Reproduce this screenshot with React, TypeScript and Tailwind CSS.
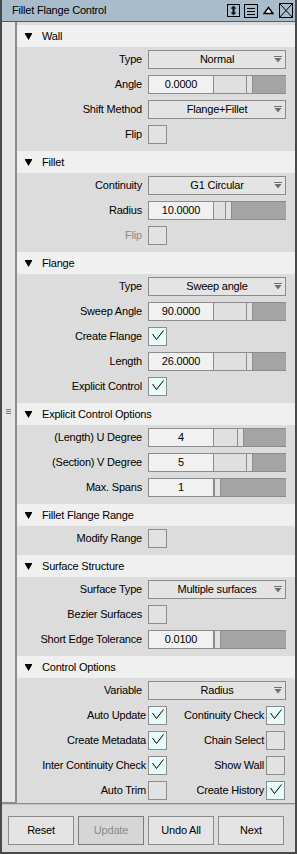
import React from 'react';

type CheckItem = { label: string; checked: boolean; disabled?: boolean };

type Row =
  | { kind: 'select'; label: string; value: string }
  | { kind: 'slider'; label: string; value: string; thumb: number }
  | { kind: 'check'; label: string; checked: boolean; disabled?: boolean }
  | { kind: 'pair'; left: CheckItem; right: CheckItem };

interface Section {
  title: string;
  rows: Row[];
}

const sections: Section[] = [
  {
    title: 'Wall',
    rows: [
      { kind: 'select', label: 'Type', value: 'Normal' },
      { kind: 'slider', label: 'Angle', value: '0.0000', thumb: 32 },
      { kind: 'select', label: 'Shift Method', value: 'Flange+Fillet' },
      { kind: 'check', label: 'Flip', checked: false },
    ],
  },
  {
    title: 'Fillet',
    rows: [
      { kind: 'select', label: 'Continuity', value: 'G1 Circular' },
      { kind: 'slider', label: 'Radius', value: '10.0000', thumb: 11 },
      { kind: 'check', label: 'Flip', checked: false, disabled: true },
    ],
  },
  {
    title: 'Flange',
    rows: [
      { kind: 'select', label: 'Type', value: 'Sweep angle' },
      { kind: 'slider', label: 'Sweep Angle', value: '90.0000', thumb: 32 },
      { kind: 'check', label: 'Create Flange', checked: true },
      { kind: 'slider', label: 'Length', value: '26.0000', thumb: 32 },
      { kind: 'check', label: 'Explicit Control', checked: true },
    ],
  },
  {
    title: 'Explicit Control Options',
    rows: [
      { kind: 'slider', label: '(Length) U Degree', value: '4', thumb: 23 },
      { kind: 'slider', label: '(Section) V Degree', value: '5', thumb: 32 },
      { kind: 'slider', label: 'Max. Spans', value: '1', thumb: 0 },
    ],
  },
  {
    title: 'Fillet Flange Range',
    rows: [{ kind: 'check', label: 'Modify Range', checked: false }],
  },
  {
    title: 'Surface Structure',
    rows: [
      { kind: 'select', label: 'Surface Type', value: 'Multiple surfaces' },
      { kind: 'check', label: 'Bezier Surfaces', checked: false },
      { kind: 'slider', label: 'Short Edge Tolerance', value: '0.0100', thumb: 0 },
    ],
  },
  {
    title: 'Control Options',
    rows: [
      { kind: 'select', label: 'Variable', value: 'Radius' },
      {
        kind: 'pair',
        left: { label: 'Auto Update', checked: true },
        right: { label: 'Continuity Check', checked: true },
      },
      {
        kind: 'pair',
        left: { label: 'Create Metadata', checked: true },
        right: { label: 'Chain Select', checked: false },
      },
      {
        kind: 'pair',
        left: { label: 'Inter Continuity Check', checked: true },
        right: { label: 'Show Wall', checked: false },
      },
      {
        kind: 'pair',
        left: { label: 'Auto Trim', checked: false },
        right: { label: 'Create History', checked: true },
      },
    ],
  },
];

const Checkbox: React.FC<{ checked: boolean }> = ({ checked }) => (
  <div
    className={`w-[19px] h-[19px] shrink-0 border border-[#8c8c8c] ${
      checked ? 'bg-[#e8fbfb]' : 'bg-[#e2e2e2]'
    }`}
  >
    {checked && (
      <svg width="17" height="17" viewBox="0 0 17 17">
        <polyline points="3.5,6 7.5,11.5 14.5,2.5" fill="none" stroke="#000" strokeWidth="1" />
      </svg>
    )}
  </div>
);

const Label: React.FC<{ text: string; disabled?: boolean }> = ({ text, disabled }) => (
  <div
    className={`w-[125px] shrink-0 h-[19px] leading-[19px] text-right whitespace-nowrap ${
      disabled ? 'text-[#8a8a8a]' : 'text-black'
    }`}
  >
    {text}
  </div>
);

const Select: React.FC<{ value: string }> = ({ value }) => (
  <div className="relative w-[138px] h-[19px] border border-[#8c8c8c] bg-[#e4e4e4] leading-[17px] text-center">
    {value}
    <svg className="absolute right-[3px] top-[5px]" width="8" height="7" viewBox="0 0 8 7">
      <rect x="0" y="0" width="8" height="1" fill="#707070" />
      <polygon points="0.5,2 7.5,2 4,6.5" fill="#707070" />
    </svg>
  </div>
);

const Slider: React.FC<{ value: string; thumb: number }> = ({ value, thumb }) => (
  <div className="flex w-[138px] h-[19px] border-y border-l border-[#8c8c8c]">
    <div className="w-[65px] shrink-0 bg-[#f1f1f1] border-r border-[#8c8c8c] leading-[17px] text-center">
      {value}
    </div>
    <div className="shrink-0 bg-[#e0e0e0]" style={{ width: thumb }} />
    <div className="w-[7px] shrink-0 bg-[#e2e2e2] border-x border-[#8c8c8c]" />
    <div className="flex-1 bg-[#a4a4a4]" />
  </div>
);

const PairCell: React.FC<{ item: CheckItem; width: string }> = ({ item, width }) => (
  <div className={`${width} shrink-0 flex justify-end items-start gap-[2px]`}>
    <div className="h-[19px] leading-[19px] whitespace-nowrap">{item.label}</div>
    <Checkbox checked={item.checked} />
  </div>
);

const RowView: React.FC<{ row: Row }> = ({ row }) => {
  if (row.kind === 'pair') {
    return (
      <div className="flex h-[25px] items-start">
        <PairCell item={row.left} width="w-[150px]" />
        <PairCell item={row.right} width="w-[118px]" />
      </div>
    );
  }
  return (
    <div className="flex h-[25px] items-start gap-[6px]">
      <Label text={row.label} disabled={row.kind === 'check' && row.disabled} />
      {row.kind === 'select' && <Select value={row.value} />}
      {row.kind === 'slider' && <Slider value={row.value} thumb={row.thumb} />}
      {row.kind === 'check' && <Checkbox checked={row.checked} />}
    </div>
  );
};

const SectionView: React.FC<{ section: Section }> = ({ section }) => (
  <div>
    <div className="h-[22px] bg-[#f0f0f0] flex items-center pl-[8px]">
      <svg width="7" height="7" viewBox="0 0 7 7">
        <rect x="0" y="0" width="7" height="1" fill="#000" />
        <polygon points="0,1 7,1 3.5,7" fill="#000" />
      </svg>
      <span className="ml-[10px]">{section.title}</span>
    </div>
    <div className="pt-[3px] pb-[1px]">
      {section.rows.map((row, i) => (
        <RowView key={i} row={row} />
      ))}
    </div>
  </div>
);

const TitleIcons: React.FC = () => (
  <div className="flex items-center pr-[2px]">
    <svg width="13" height="13" viewBox="0 0 13 13">
      <rect x="0.5" y="0.5" width="12" height="12" fill="none" stroke="#000" />
      <rect x="5.5" y="4" width="2" height="5" fill="#000" />
      <polygon points="3.5,4.5 6.5,1.8 9.5,4.5" fill="#000" />
      <polygon points="3.5,8.5 6.5,11.2 9.5,8.5" fill="#000" />
    </svg>
    <svg className="ml-[4px]" width="14" height="14" viewBox="0 0 14 14">
      <rect x="0.5" y="0.5" width="13" height="13" fill="none" stroke="#000" />
      <line x1="3" y1="4.5" x2="11" y2="4.5" stroke="#000" />
      <line x1="3" y1="7.5" x2="11" y2="7.5" stroke="#000" />
      <line x1="3" y1="10.5" x2="11" y2="10.5" stroke="#000" />
    </svg>
    <svg className="ml-[5px]" width="11" height="9" viewBox="0 0 11 9">
      <polygon points="1,7.5 5.5,1.5 10,7.5" fill="#f6f6f6" stroke="#000" strokeWidth="1.4" />
    </svg>
    <svg className="ml-[5px]" width="14" height="15" viewBox="0 0 14 15">
      <rect x="0.5" y="0.5" width="13" height="14" fill="none" stroke="#000" />
      <line x1="1" y1="1" x2="13" y2="14" stroke="#000" />
      <line x1="13" y1="1" x2="1" y2="14" stroke="#000" />
    </svg>
  </div>
);

const buttons = [
  { label: 'Reset', disabled: false },
  { label: 'Update', disabled: true },
  { label: 'Undo All', disabled: false },
  { label: 'Next', disabled: false },
];

export default function App() {
  return (
    <div className="w-[297px] h-[854px] flex flex-col bg-[#dcdcdc] border-x-2 border-b-2 border-[#4a4a4a] font-['Liberation_Sans',Arial,sans-serif] text-[11px] tracking-[-0.2px] text-black overflow-hidden">
      <div className="h-[22px] shrink-0 flex items-center justify-between bg-[#a8bccc] border-b border-[#5a5a5a] pl-[10px]">
        <span>Fillet Flange Control</span>
        <TitleIcons />
      </div>

      <div className="flex h-[781px] shrink-0">
        <div className="w-[15px] shrink-0 flex items-center justify-center bg-[#e6e6e6] border-r-2 border-b border-[#8c8c8c]">
          <svg width="5" height="6" viewBox="0 0 5 6">
            <line x1="0" y1="0.5" x2="5" y2="0.5" stroke="#7a7a7a" />
            <line x1="0" y1="2.5" x2="5" y2="2.5" stroke="#7a7a7a" />
            <line x1="0" y1="4.5" x2="5" y2="4.5" stroke="#7a7a7a" />
          </svg>
        </div>
        <div className="flex-1 overflow-hidden pt-[3px]">
          {sections.map((s) => (
            <SectionView key={s.title} section={s} />
          ))}
        </div>
      </div>

      <div className="h-[1px] shrink-0 bg-[#8c8c8c]" />
      <div className="h-[1px] shrink-0 bg-[#c4c4c4]" />

      <div className="flex-1 flex gap-[4px] pl-[6px] pt-[11px]">
        {buttons.map((b) => (
          <div
            key={b.label}
            className={`w-[66px] h-[29px] flex items-center justify-center border ${
              b.disabled
                ? 'bg-[#d6d6d6] border-[#7c7c7c] text-[#8a8a8a]'
                : 'bg-[#e4e4e4] border-[#8c8c8c] text-black'
            }`}
          >
            {b.label}
          </div>
        ))}
      </div>
    </div>
  );
}
